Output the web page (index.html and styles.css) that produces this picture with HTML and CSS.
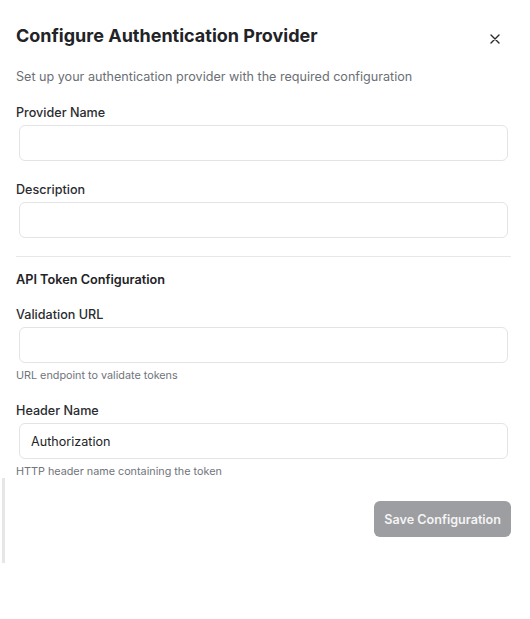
FILE: index.html
```html
<!DOCTYPE html>
<html lang="en">
<head>
<meta charset="utf-8">
<title>Configure Authentication Provider</title>
<link rel="stylesheet" href="styles.css">
</head>
<body>
<div class="dialog">
  <div class="dialog-header">
    <h2 class="dialog-title">Configure Authentication Provider</h2>
    <button class="close-btn" type="button" aria-label="Close">
      <svg width="10" height="10" viewBox="0 0 10 10"><path d="M1 1 L9 9 M9 1 L1 9" stroke="#2b2b2b" stroke-width="1.4" stroke-linecap="round" fill="none"/></svg>
    </button>
  </div>
  <p class="dialog-desc">Set up your authentication provider with the required configuration</p>

  <form class="form">
    <div class="field">
      <label class="label">Provider Name</label>
      <input class="input" type="text">
    </div>
    <div class="field">
      <label class="label">Description</label>
      <input class="input" type="text">
    </div>

    <hr class="divider">

    <h3 class="section-title">API Token Configuration</h3>

    <div class="field">
      <label class="label">Validation URL</label>
      <input class="input" type="text">
      <p class="help">URL endpoint to validate tokens</p>
    </div>
    <div class="field">
      <label class="label">Header Name</label>
      <input class="input" type="text" value="Authorization">
      <p class="help">HTTP header name containing the token</p>
    </div>

    <div class="actions">
      <button class="save-btn" type="button">Save Configuration</button>
    </div>
  </form>
  <div class="side-bar"></div>
</div>
</body>
</html>
```

FILE: styles.css
```css
* { box-sizing: border-box; }

html, body {
  margin: 0;
  padding: 0;
  background: #ffffff;
}

body {
  font-family: Inter, "Noto Sans", "Liberation Sans", sans-serif;
  color: #1f2328;
}

.dialog {
  position: relative;
  padding: 22px 19px 40px 16px;
}

.dialog-header {
  display: flex;
  justify-content: space-between;
  align-items: flex-start;
}

.dialog-title {
  margin: 0;
  font-size: 18px;
  line-height: 28px;
  font-weight: 700;
  color: #222326;
  letter-spacing: 0;
}

.close-btn {
  margin: 12px 11px 0 0;
  padding: 0;
  width: 10px;
  height: 10px;
  border: none;
  background: none;
  display: flex;
  cursor: pointer;
}

.dialog-desc {
  margin: 17px 0 0;
  font-size: 12.6px;
  line-height: 20px;
  color: #6b6f76;
}

.form {
  display: flex;
  flex-direction: column;
  margin-top: 15px;
}

.field {
  display: flex;
  flex-direction: column;
  margin-bottom: 16px;
}

.label {
  padding-top: 1px;
  font-size: 12.6px;
  line-height: 20px;
  font-weight: 500;
  color: #2a2c30;
}

.input {
  margin: 2px 3px 2px;
  height: 36px;
  border: 1px solid #e3e4e7;
  border-radius: 6px;
  padding: 0 11px;
  font-family: inherit;
  font-size: 12.6px;
  color: #222326;
  background: #fff;
  outline: none;
}

.help {
  margin: 3px 0 0;
  font-size: 10.8px;
  line-height: 16px;
  color: #70747b;
}

.divider {
  margin: 0 0 13px;
  border: none;
  border-top: 1px solid #e6e7ea;
  height: 0;
}

.section-title {
  margin: 0 0 14px;
  font-size: 12.7px;
  line-height: 20px;
  font-weight: 600;
  color: #222326;
}

.actions {
  display: flex;
  justify-content: flex-end;
  margin-top: 5px;
}

.save-btn {
  height: 36px;
  padding: 0 10px;
  border: none;
  border-radius: 6px;
  background: #9d9ea1;
  color: #f4f4f5;
  font-family: inherit;
  font-size: 12.6px;
  font-weight: 600;
}

.side-bar {
  position: absolute;
  left: 2px;
  top: 478px;
  width: 3px;
  height: 85px;
  background: #e6e6e8;
}
```
